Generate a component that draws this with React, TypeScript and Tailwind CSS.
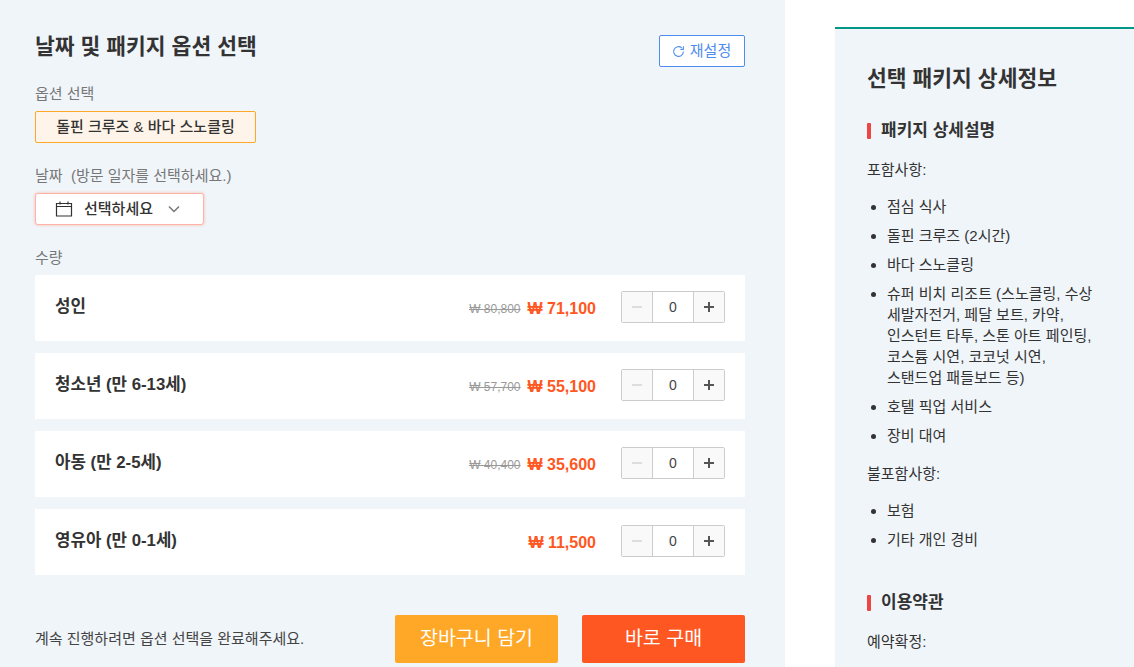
import React from "react";

const font = { fontFamily: '"Liberation Sans","Noto Sans CJK KR",sans-serif' };

function Row({ name, was, now }: { name: string; was?: string; now: string }) {
  return (
    <div className="flex h-[66px] items-center bg-white pl-5 pr-5">
      <div className="-mt-[3px] flex-1 text-[16.8px] font-bold leading-6 text-[#333]">{name}</div>
      {was && <span className="mr-[7px] mt-[1px] text-xs text-[#999] line-through">₩ {was}</span>}
      <span className="mr-[25px] mt-[1px] text-base font-bold text-[#ff5722]">₩ {now}</span>
      <div className="-mt-[2px] flex h-8 w-[104px] items-stretch overflow-hidden rounded-[2px] border border-[#ccc]">
        <div className="flex w-[30px] items-center justify-center bg-[#f9f9f9] text-[#ddd]">
          <svg width="12" height="12" viewBox="0 0 12 12"><path d="M1 6h10" stroke="currentColor" strokeWidth="2" /></svg>
        </div>
        <div className="flex flex-1 items-center justify-center border-x border-[#ccc] bg-white text-sm text-[#444]">0</div>
        <div className="flex w-[30px] items-center justify-center bg-[#f9f9f9] text-[#555]">
          <svg width="12" height="12" viewBox="0 0 12 12"><path d="M1 6h10M6 1v10" stroke="currentColor" strokeWidth="2" /></svg>
        </div>
      </div>
    </div>
  );
}

function Heading({ children }: { children: React.ReactNode }) {
  return (
    <div className="flex items-center gap-[10px] text-[17px] font-bold leading-6 text-[#333]">
      <span className="h-4 w-1 rounded-[1px] bg-[#ef4444]" />
      {children}
    </div>
  );
}

function Bullets({ items }: { items: string[] }) {
  return (
    <ul className="mt-4 list-disc break-keep pl-[20px] text-[15px] leading-[21px] text-[#333]">
      {items.map((t) => (
        <li key={t} className="mb-2">{t}</li>
      ))}
    </ul>
  );
}

export default function App() {
  return (
    <div style={font} className="flex h-[667px] w-[1134px] overflow-hidden bg-white">
      <div className="flex w-[785px] shrink-0 flex-col bg-[#f0f5fa] pl-[35px] pr-10 pt-[35px]">
        <div className="flex items-start justify-between">
          <h2 className="text-[21.5px] font-bold leading-[24px] text-[#333]">날짜 및 패키지 옵션 선택</h2>
          <button className="flex h-8 w-[86px] items-center justify-center gap-[5px] rounded-[2px] border border-[#4f8cf0] bg-white pr-[1px] text-[15px] text-[#4f8cf0]">
            <svg width="13" height="13" viewBox="0 0 24 24" fill="none" stroke="currentColor" strokeWidth="2">
              <path d="M21 12a9 9 0 1 1-3-6.700" />
              <path d="M21 2.500v5.500h-5.500" />
            </svg>
            재설정
          </button>
        </div>
        <div className="mt-[17px] text-[15px] leading-[20px] text-[#777]">옵션 선택</div>
        <div className="mt-[7px] flex h-8 w-[221px] items-center justify-center rounded-[2px] border border-[#ffa726] bg-[#fff4e9] text-[15px] font-medium text-[#333]">
          돌핀 크루즈 &amp; 바다 스노클링
        </div>
        <div className="mt-[23px] text-[15px] leading-[20px] text-[#777]">날짜&nbsp; (방문 일자를 선택하세요.)</div>
        <div className="mt-[7px] flex h-8 w-[169px] items-center justify-center gap-[11px] rounded-[3px] border border-[#ffb5a5] bg-white pr-[3px] text-[15px] font-medium text-[#333] shadow-[0_0_3px_rgba(255,120,90,0.5)]">
          <svg width="18" height="16" viewBox="0 0 18 16" fill="none" stroke="#333" strokeWidth="1.200">
            <path d="M1.500 2.500h15v12.500h-15zM1.500 5.500h15M5 .5v3M13 .5v3M8 2.500h2" />
          </svg>
          <span>선택하세요</span>
          <svg className="ml-[3px]" width="14" height="14" viewBox="0 0 14 14" fill="none" stroke="#777" strokeWidth="1.500">
            <path d="M2 4.500l5 5 5-5" />
          </svg>
        </div>
        <div className="mt-[23px] text-[15px] leading-[20px] text-[#777]">수량</div>
        <div className="mt-[7px] flex flex-col gap-3">
          <Row name="성인" was="80,800" now="71,100" />
          <Row name="청소년 (만 6-13세)" was="57,700" now="55,100" />
          <Row name="아동 (만 2-5세)" was="40,400" now="35,600" />
          <Row name="영유아 (만 0-1세)" now="11,500" />
        </div>
        <div className="mt-10 flex items-center">
          <div className="flex-1 text-[15px] text-[#444]">계속 진행하려면 옵션 선택을 완료해주세요.</div>
          <button className="h-12 w-[163px] rounded-[2px] bg-[#ffa726] text-[19.5px] text-white">장바구니 담기</button>
          <button className="ml-6 h-12 w-[163px] rounded-[2px] bg-[#ff5722] text-[19.5px] text-white">바로 구매</button>
        </div>
      </div>
      <div className="ml-[50px] flex-1 pt-[27px]">
        <div className="h-[700px] border-t-2 border-[#009688] bg-[#f0f5fa] pl-8 pr-10 pt-[36px]">
          <h3 className="text-[21.5px] font-bold leading-[28px] text-[#333]">선택 패키지 상세정보</h3>
          <div className="mt-[26px]"><Heading>패키지 상세설명</Heading></div>
          <p className="mt-[17px] text-[15px] leading-[20px] text-[#333]">포함사항:</p>
          <Bullets items={["점심 식사", "돌핀 크루즈 (2시간)", "바다 스노클링", "슈퍼 비치 리조트 (스노클링, 수상 세발자전거, 페달 보트, 카약, 인스턴트 타투, 스톤 아트 페인팅, 코스튬 시연, 코코넛 시연, 스탠드업 패들보드 등)", "호텔 픽업 서비스", "장비 대여"]} />
          <p className="mt-[18px] text-[15px] leading-[20px] text-[#333]">불포함사항:</p>
          <Bullets items={["보험", "기타 개인 경비"]} />
          <div className="mt-[41px]"><Heading>이용약관</Heading></div>
          <p className="mt-[17px] text-[15px] leading-[20px] text-[#333]">예약확정:</p>
        </div>
      </div>
    </div>
  );
}
